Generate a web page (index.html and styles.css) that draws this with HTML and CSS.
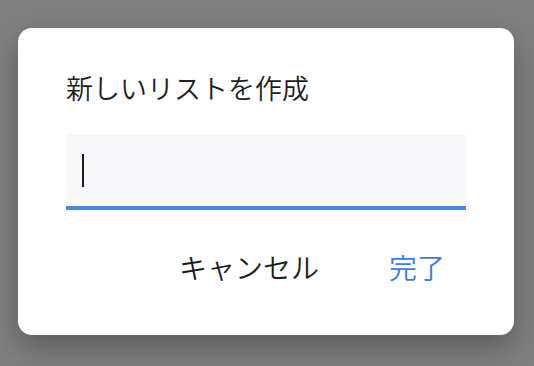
FILE: index.html
```html
<!DOCTYPE html>
<html lang="ja">
<head>
<meta charset="utf-8">
<link rel="stylesheet" href="styles.css">
</head>
<body>
<div class="dialog">
  <div class="title">新しいリストを作成</div>
  <div class="field"><span class="caret"></span></div>
  <div class="actions">
    <span class="btn cancel">キャンセル</span>
    <span class="btn done">完了</span>
  </div>
</div>
</body>
</html>
```
FILE: styles.css
```css
html, body {
  margin: 0;
  padding: 0;
}
body {
  background: #808080;
  width: 534px;
  height: 366px;
  overflow: hidden;
  font-family: "Noto Sans CJK JP", "Noto Sans", sans-serif;
  font-weight: 350;
  padding-top: 28px;
  box-sizing: border-box;
}
.dialog {
  margin-left: 18px;
  width: 496px;
  height: 307px;
  box-sizing: border-box;
  background: #ffffff;
  border-radius: 14px;
  box-shadow: 0 12px 30px rgba(0, 0, 0, 0.3);
  padding: 42px 48px 0 48px;
}
.title {
  font-size: 27px;
  line-height: 36px;
  color: #1e1e1e;
}
.field {
  margin-top: 28px;
  height: 72px;
  background: #f8f8fa;
  border-bottom: 4px solid #4a88e6;
  display: flex;
  align-items: center;
  padding-left: 16px;
}
.caret {
  width: 2px;
  height: 33px;
  background: #1c1c1c;
}
.actions {
  margin-top: 39px;
  display: flex;
  justify-content: flex-end;
  gap: 28px;
}
.btn {
  font-size: 28px;
  line-height: 36px;
  padding: 0 21px;
}
.cancel {
  color: #1e1e1e;
}
.done {
  color: #3a7ee2;
}
```
